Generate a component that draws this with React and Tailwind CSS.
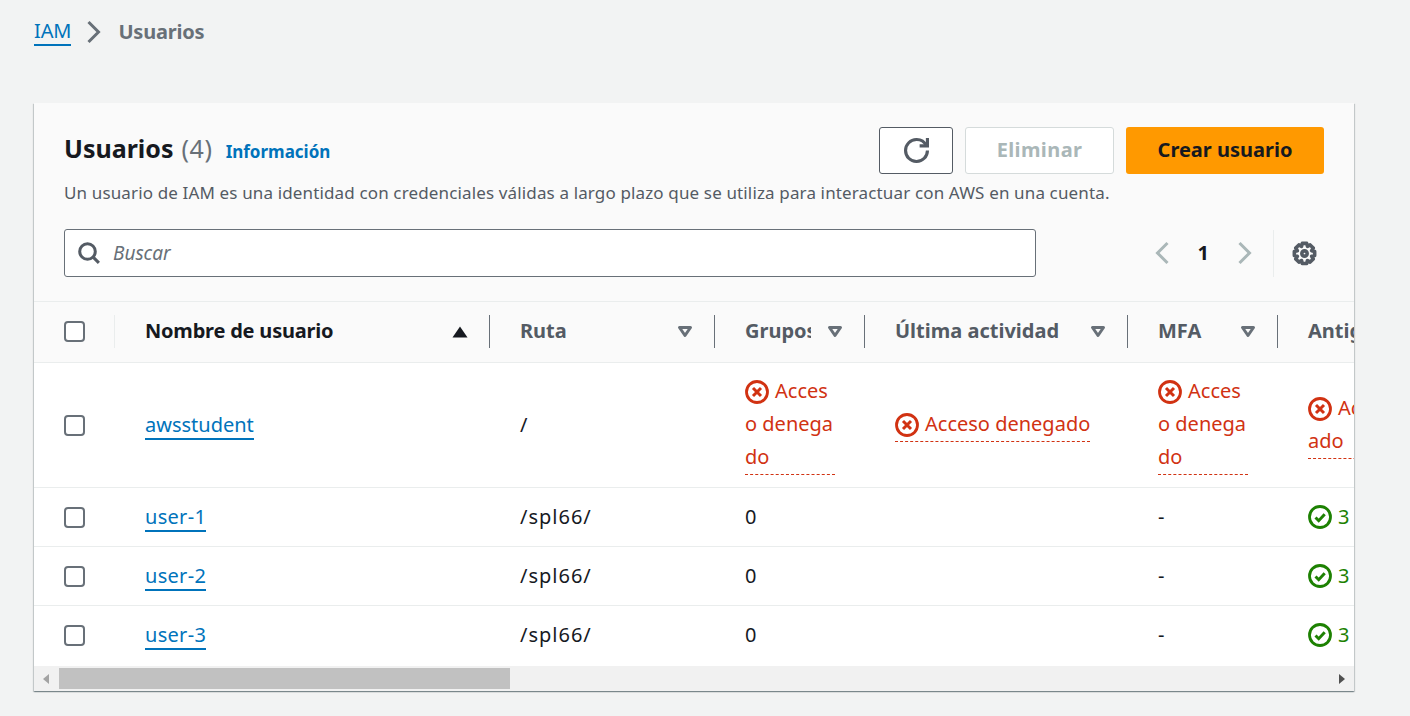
const Refresh = () => (
  <svg viewBox="0 0 16 16" className="w-[25px] h-[25px]" fill="none" stroke="#545b64" strokeWidth="2">
    <path d="M10 5h5V0" />
    <path d="M15 8a6.957 6.957 0 0 1-7 7 6.957 6.957 0 0 1-7-7 6.957 6.957 0 0 1 7-7 6.87 6.87 0 0 1 6.3 4" />
  </svg>
)

const Search = () => (
  <svg viewBox="0 0 16 16" className="w-[24px] h-[24px] shrink-0" fill="none" stroke="#545b64" strokeWidth="2">
    <circle cx="7" cy="7" r="5.2" />
    <path d="m14.6 14.6-4-4" />
  </svg>
)

const Gear = () => (
  <svg viewBox="0 0 16 16" className="w-[25px] h-[25px]" fill="none" stroke="#545b64" strokeWidth="2.3" strokeLinejoin="round">
    <circle cx="8" cy="8" r="1.7" />
    <path d="M6.6 1.5h2.8l.5 1.9 1.7-.9 2 2-1 1.7 1.9.5v2.6l-1.9.5 1 1.7-2 2-1.7-1-.5 1.9H6.6l-.5-1.9-1.7 1-2-2 1-1.7-1.9-.5V6.7l1.9-.5-1-1.7 2-2 1.7.9z" />
  </svg>
)

const Chevron = ({ left, color = "#aab7b8" }) => (
  <svg viewBox="0 0 14 24" className="w-[14px] h-[24px]" fill="none" stroke={color} strokeWidth="3">
    <path d={left ? "M12.5 2 2.5 12l10 10" : "M1.5 2l10 10-10 10"} />
  </svg>
)

const SortDown = () => (
  <svg viewBox="0 0 16 16" className="w-[16px] h-[16px] shrink-0" fill="none" stroke="#687078" strokeWidth="3" strokeLinejoin="round">
    <path d="M2.5 3.5h11L8 11.5z" />
  </svg>
)

const SortUp = () => (
  <svg viewBox="0 0 16 16" className="w-[16px] h-[16px] shrink-0" fill="#16191f">
    <path d="M0.5 13.5 8 2.5l7.5 11z" />
  </svg>
)

const ErrorIcon = () => (
  <svg viewBox="0 0 24 24" className="inline-block w-[24px] h-[24px] mr-[6px] align-[-6px]" fill="none" stroke="#d13212">
    <circle cx="12" cy="12" r="10.5" strokeWidth="2.8" />
    <path d="m8 8 8 8M16 8l-8 8" strokeWidth="3" />
  </svg>
)

const OkIcon = () => (
  <svg viewBox="0 0 24 24" className="w-[24px] h-[24px] shrink-0" fill="none" stroke="#1d8102">
    <circle cx="12" cy="12" r="10.5" strokeWidth="2.8" />
    <path d="m7.5 12.5 3.2 3.2 6-6.4" strokeWidth="3" />
  </svg>
)

const Check = ({ cls = "" }) => (
  <input
    type="checkbox"
    className={`appearance-none block w-[21px] h-[21px] bg-white border-2 border-[#687078] rounded-[4px] ${cls}`}
  />
)

const Denied = ({ cls }) => (
  <span className={`inline-block ${cls} border-b border-dashed border-[#d13212] text-[#d13212] leading-[33px] pb-[1px]`}>
    <ErrorIcon />
    Acceso denegado
  </span>
)

const Header = ({ label, sort, labelW = "flex-1", active, ml = "ml-0", tracking = "" }) => (
  <th className="p-0 font-bold text-left">
    <div className="flex items-center h-[33px] pl-[30px]">
      <span className={`${labelW} ${tracking} pb-[2px] overflow-hidden whitespace-nowrap ${active ? "text-[#16191f]" : "text-[#545b64]"}`}>{label}</span>
      <span className={ml}>{sort === "up" ? <SortUp /> : <SortDown />}</span>
      <span className="w-px h-[33px] bg-[#687078] ml-[21px] shrink-0" />
    </div>
  </th>
)

const users = ["user-1", "user-2", "user-3"]

export default function App() {
  return (
    <div
      className="min-h-screen h-[716px] overflow-hidden bg-[#f2f3f3] text-[20px] text-[#16191f] pl-[34px] pr-[56px]"
      style={{ fontFamily: '"Noto Sans", sans-serif' }}
    >
      {/* breadcrumb */}
      <div className="flex items-center h-[64px]">
        <a className="text-[#0073bb] border-b-2 border-[#0073bb] leading-[26px] tracking-[-0.1px]">IAM</a>
        <span className="ml-[16px] mr-[17px]"><Chevron color="#687078" /></span>
        <span className="font-bold text-[#687078] tracking-[-0.2px]">Usuarios</span>
      </div>

      <div className="mt-[39px] bg-white shadow-[0_1px_1px_0_rgba(0,28,36,0.3),1px_1px_1px_0_rgba(0,28,36,0.15),-1px_1px_1px_0_rgba(0,28,36,0.15)]">
        {/* header */}
        <div className="bg-[#fafafa] px-[30px] pt-[24px] h-[199px] border-b border-[#eaeded]">
          <div className="flex items-center justify-between h-[47px]">
            <div className="flex items-baseline -mt-[4px]">
              <h1 className="text-[25px] font-bold">Usuarios</h1>
              <span className="text-[25px] text-[#687078] ml-[8px] tracking-[0.6px]">(4)</span>
              <a className="text-[17px] font-bold text-[#0073bb] ml-[13px]">Información</a>
            </div>
            <div className="flex gap-[12px] h-[47px]">
              <button className="w-[74px] flex items-center justify-center bg-white border border-[#545b64] rounded-[3px]"><Refresh /></button>
              <button className="w-[149px] bg-white border border-[#d5dbdb] rounded-[3px] font-bold text-[#aab7b8] tracking-[0.4px] pb-[2px]">Eliminar</button>
              <button className="w-[198px] bg-[#ff9900] rounded-[3px] font-bold text-[#16191f] pb-[2px]">Crear usuario</button>
            </div>
          </div>
          <p className="text-[17px] tracking-[0.14px] text-[#545b64] leading-[24px] mt-[7px] whitespace-nowrap">
            Un usuario de IAM es una identidad con credenciales válidas a largo plazo que se utiliza para interactuar con AWS en una cuenta.
          </p>
          <div className="flex items-center mt-[24px]">
            <div className="w-[972px] h-[48px] flex items-center bg-white border border-[#687078] rounded-[3px] pl-[12px]">
              <Search />
              <span className="italic text-[#687078] ml-[12px] text-[19px]">Buscar</span>
            </div>
            <div className="flex items-center ml-auto h-[47px]">
              <Chevron left />
              <span className="font-bold mx-[29px]">1</span>
              <Chevron />
              <span className="w-px h-[47px] bg-[#eaeded] ml-[21px]" />
              <span className="ml-[18px] mr-[7px]"><Gear /></span>
            </div>
          </div>
        </div>

        {/* table */}
        <div className="overflow-hidden pb-[2px]">
          <table className="table-fixed w-[1644px]">
            <colgroup>
              <col className="w-[81px]" />
              <col className="w-[375px]" />
              <col className="w-[225px]" />
              <col className="w-[150px]" />
              <col className="w-[263px]" />
              <col className="w-[150px]" />
              <col className="w-[400px]" />
            </colgroup>
            <thead>
              <tr className="h-[60px] bg-[#fafafa] border-b border-[#eaeded]">
                <th className="p-0">
                  <div className="flex items-center h-[33px] pl-[30px]">
                    <Check />
                    <span className="w-px h-[33px] bg-[#eaeded] ml-auto" />
                  </div>
                </th>
                <Header label="Nombre de usuario" sort="up" active tracking="tracking-[-0.2px]" />
                <Header label="Ruta" />
                <Header label="Grupos" labelW="w-[66px]" ml="ml-[16px]" />
                <Header label="Última actividad" />
                <Header label="MFA" />
                <th className="p-0 pl-[30px] pb-[2px] font-bold text-left text-[#545b64] whitespace-nowrap">Antigüedad</th>
              </tr>
            </thead>
            <tbody>
              <tr className="h-[125px] border-b border-[#eaeded]">
                <td className="pl-[30px]"><Check cls="mt-[1px]" /></td>
                <td className="pl-[30px]"><a className="text-[#0073bb] border-b-2 border-[#0073bb]">awsstudent</a></td>
                <td className="pl-[30px]">/</td>
                <td className="pl-[30px]"><Denied cls="w-[90px] break-all" /></td>
                <td className="pl-[30px]"><Denied cls="w-[195px] whitespace-nowrap" /></td>
                <td className="pl-[30px]"><Denied cls="w-[90px] break-all" /></td>
                <td className="pl-[30px]"><Denied cls="w-[170px] break-all" /></td>
              </tr>
              {users.map((u, i) => (
                <tr key={u} className={`h-[59px] ${i < 2 ? "border-b border-[#eaeded]" : ""}`}>
                  <td className="pl-[30px]"><Check cls="mt-[1px]" /></td>
                  <td className="pl-[30px]"><a className="text-[#0073bb] border-b-2 border-[#0073bb] tracking-[0.3px]">{u}</a></td>
                  <td className="pl-[30px] tracking-[1px]">/spl66/</td>
                  <td className="pl-[30px]">0</td>
                  <td></td>
                  <td className="pl-[30px]">-</td>
                  <td className="pl-[30px]">
                    <div className="flex items-center gap-[6px] text-[#1d8102]"><OkIcon />3</div>
                  </td>
                </tr>
              ))}
            </tbody>
          </table>
        </div>

        {/* scrollbar */}
        <div className="flex items-center h-[25px] bg-[#f1f1f1]">
          <svg viewBox="0 0 8 10" className="w-[8px] h-[10px] ml-[8px]" fill="#a3a3a3"><path d="M7 0v10L1 5z" /></svg>
          <div className="w-[451px] h-[21px] bg-[#c1c1c1] ml-[9px]" />
          <svg viewBox="0 0 8 10" className="w-[8px] h-[10px] ml-auto mr-[8px]" fill="#505050"><path d="M1 0v10l6-5z" /></svg>
        </div>
      </div>
    </div>
  )
}
